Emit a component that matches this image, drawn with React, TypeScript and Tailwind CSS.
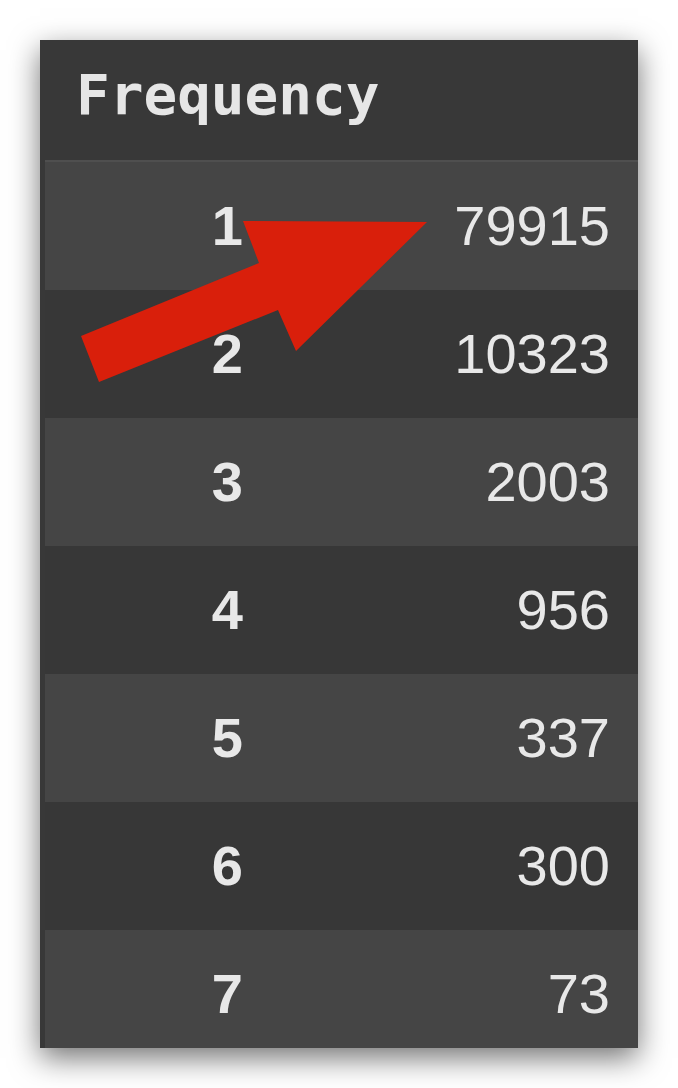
const rows = [
    { rank: 1, count: 79915 },
    { rank: 2, count: 10323 },
    { rank: 3, count: 2003 },
    { rank: 4, count: 956 },
    { rank: 5, count: 337 },
    { rank: 6, count: 300 },
    { rank: 7, count: 73 },
];

export default function App() {
    return (
        <div className="relative w-[678px] h-[1088px] bg-white pl-[40px] pt-[40px] overflow-hidden">
            {/* PANEL */}
            <div className="w-[598px] h-[1008px] bg-[#383838] overflow-hidden shadow-[0_10px_28px_rgba(0,0,0,0.55)] flex flex-col">
                {/* HEADER */}
                <div className="h-[120px] shrink-0 pl-[36px] pt-[27px]">
                    <span className="font-['DejaVu_Sans_Mono',monospace] font-bold text-[56px] leading-none text-[#e6e6e6]">
                        Frequency
                    </span>
                </div>
                <div className="ml-[5px] h-[2px] shrink-0 bg-[#4f4f4f]"></div>

                {/* ROWS */}
                <div className="ml-[5px] flex flex-col font-['Liberation_Sans',Arial,sans-serif] text-[56px] leading-none text-[#e8e8e8]">
                    {rows.map((r, i) => (
                        <div
                            key={r.rank}
                            className={`h-[128px] shrink-0 flex items-center ${i % 2 === 0 ? "bg-[#454545]" : "bg-[#373737]"}`}
                        >
                            <div className="w-[198px] text-right font-bold">{r.rank}</div>
                            <div className="flex-1 text-right pr-[28px]">{r.count}</div>
                        </div>
                    ))}
                </div>
            </div>

            {/* ARROW */}
            <svg className="absolute left-0 top-0" width="678" height="1088" viewBox="0 0 678 1088">
                <polygon
                    points="81,336 259,263 243,221 427,222 296,351 278,310 99,382"
                    fill="#d91f0b"
                />
            </svg>
        </div>
    );
}
